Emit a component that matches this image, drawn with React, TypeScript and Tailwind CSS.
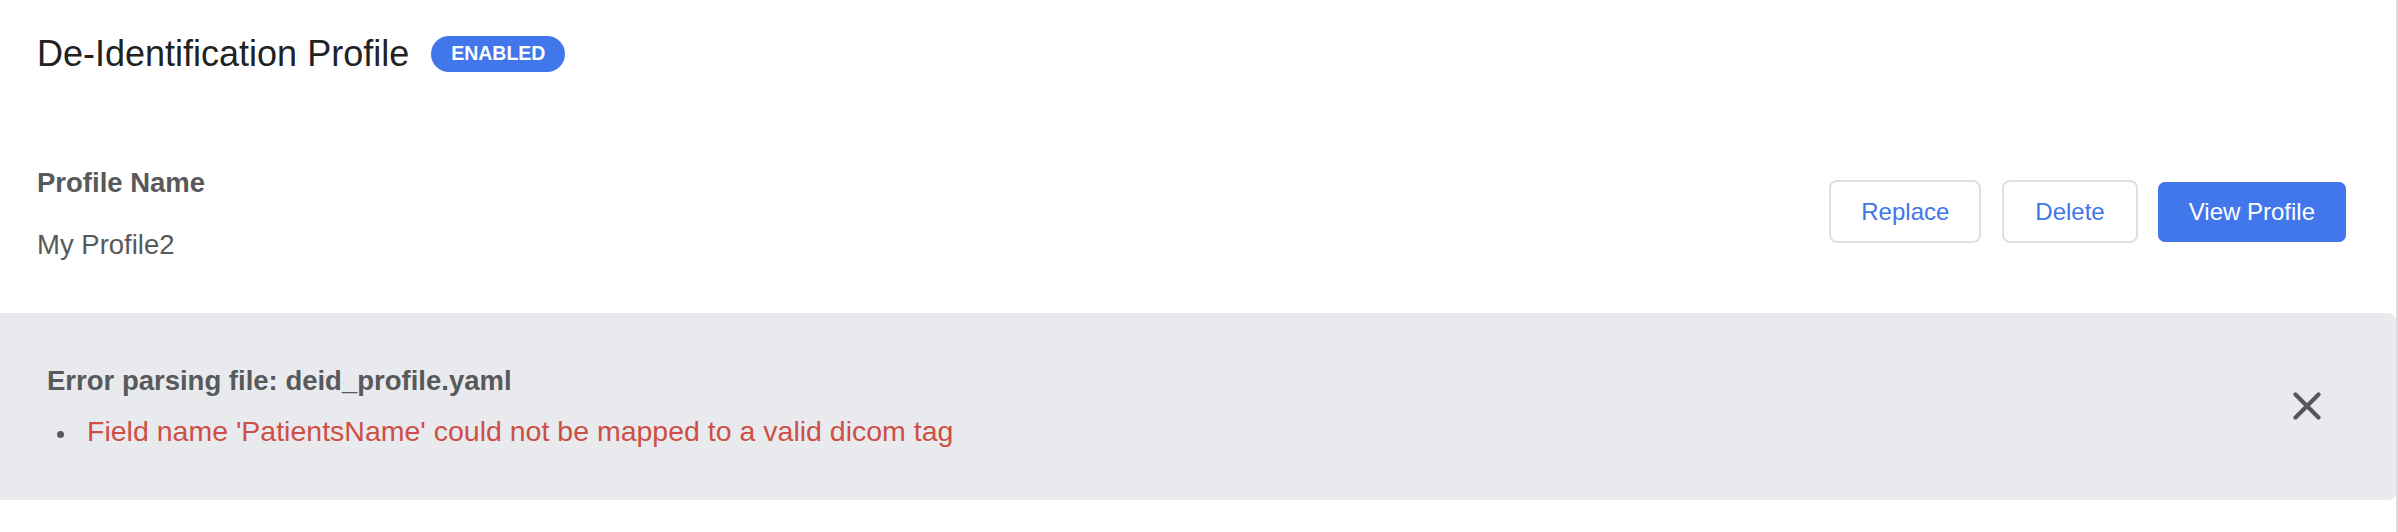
import React from "react";

const font = { fontFamily: '"Liberation Sans", Arial, Helvetica, sans-serif' };

function CloseIcon() {
  return (
    <svg width="28" height="28" viewBox="0 0 28 28" fill="none" aria-hidden="true">
      <path d="M2.5 2.5 L25.5 25.5 M25.5 2.5 L2.5 25.5" stroke="#555659" strokeWidth="4.2" strokeLinecap="round" />
    </svg>
  );
}

export default function App() {
  return (
    <div className="min-h-[532px] w-full bg-white" style={font}>
      <div className="min-h-[532px] border-r-2 border-[#dcdcdc]">
        {/* header */}
        <div className="flex items-center gap-[22px] pl-[37px] pt-[36px]">
          <h1 className="text-[36px] leading-[36px] font-normal text-[#222222]">De-Identification Profile</h1>
          <span className="flex h-[36px] items-center rounded-full bg-[#4177eb] px-[20px] text-[19.5px] font-bold leading-none text-white">
            ENABLED
          </span>
        </div>

        {/* profile */}
        <div className="mt-[97px] flex items-center justify-between pl-[37px] pr-[50px]">
          <div>
            <div className="text-[27.5px] leading-[27.5px] font-bold text-[#58595b]">Profile Name</div>
            <div className="mt-[34.5px] text-[27.5px] leading-[27.5px] text-[#58595b]">My Profile2</div>
          </div>
          <div className="mb-[4px] flex items-center">
            <button
              type="button"
              className="h-[63px] rounded-[8px] border-2 border-[#dfdfdf] bg-white px-[30px] text-[24px] text-[#4076e9]"
            >
              Replace
            </button>
            <button
              type="button"
              className="ml-[21px] h-[63px] rounded-[8px] border-2 border-[#dfdfdf] bg-white px-[31px] text-[24px] text-[#4076e9]"
            >
              Delete
            </button>
            <button
              type="button"
              className="ml-[20px] h-[60px] rounded-[7px] bg-[#4177eb] px-[31px] text-[24px] text-white"
            >
              View Profile
            </button>
          </div>
        </div>

        {/* error */}
        <div className="mt-[54px] flex h-[187px] items-center justify-between rounded-r-[8px] bg-[#e9eaee] pl-[47px] pr-[75px]">
          <div>
            <div className="text-[27.5px] leading-[27.5px] font-bold text-[#58595b]">
              Error parsing file: deid_profile.yaml
            </div>
            <ul className="mt-[23px]">
              <li className="flex items-start">
                <span className="ml-[10px] mr-[23px] mt-[13.5px] h-[7px] w-[7px] shrink-0 rounded-full bg-[#58595b]" />
                <span className="text-[28.5px] leading-[28.5px] text-[#cd4f45]">
                  Field name 'PatientsName' could not be mapped to a valid dicom tag
                </span>
              </li>
            </ul>
          </div>
          <button type="button" aria-label="Dismiss" className="flex items-center justify-center">
            <CloseIcon />
          </button>
        </div>
      </div>
    </div>
  );
}
